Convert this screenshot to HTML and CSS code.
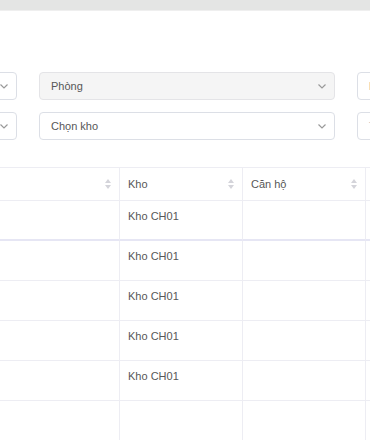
FILE: index.html
```html
<!doctype html>
<html lang="vi">
  <head>
    <meta charset="UTF-8" />
    <meta name="viewport" content="width=device-width, initial-scale=1.0" />
    <title>Kho</title>
    <link rel="stylesheet" href="styles.css">
  </head>
  <body>
    <div class="topbar"></div>
    <div class="filters">
      <div class="select"><span class="value"></span><svg class="chevron" width="8" height="5" viewBox="0 0 8 5"><polyline points="0.5,0.5 4,4 7.5,0.5" /></svg></div>
      <div class="select disabled"><span class="value">Phòng</span><svg class="chevron" width="8" height="5" viewBox="0 0 8 5"><polyline points="0.5,0.5 4,4 7.5,0.5" /></svg></div>
      <div class="select"><span class="value">Loại</span></div>
      <div class="select"><span class="value"></span><svg class="chevron" width="8" height="5" viewBox="0 0 8 5"><polyline points="0.5,0.5 4,4 7.5,0.5" /></svg></div>
      <div class="select"><span class="value">Chọn kho</span><svg class="chevron" width="8" height="5" viewBox="0 0 8 5"><polyline points="0.5,0.5 4,4 7.5,0.5" /></svg></div>
      <div class="select"><span class="value placeholder">Tìm kiếm</span></div>
    </div>
    <div class="table">
      <div class="th"><span></span><svg class="sort" width="6" height="10" viewBox="0 0 6 10"><polygon points="3,0 6,4 0,4" /><polygon points="0,6 6,6 3,10" /></svg></div>
      <div class="th"><span>Kho</span><svg class="sort" width="6" height="10" viewBox="0 0 6 10"><polygon points="3,0 6,4 0,4" /><polygon points="0,6 6,6 3,10" /></svg></div>
      <div class="th"><span>Căn hộ</span><svg class="sort" width="6" height="10" viewBox="0 0 6 10"><polygon points="3,0 6,4 0,4" /><polygon points="0,6 6,6 3,10" /></svg></div>
      <div class="th"></div>

      <div class="td first"></div><div class="td first">Kho CH01</div><div class="td first"></div><div class="td first"></div>
      <div class="td"></div><div class="td">Kho CH01</div><div class="td"></div><div class="td"></div>
      <div class="td"></div><div class="td">Kho CH01</div><div class="td"></div><div class="td"></div>
      <div class="td"></div><div class="td">Kho CH01</div><div class="td"></div><div class="td"></div>
      <div class="td"></div><div class="td">Kho CH01</div><div class="td"></div><div class="td"></div>
      <div class="td"></div><div class="td"></div><div class="td"></div><div class="td"></div>
    </div>
  </body>
</html>
```

FILE: styles.css
```css
body {
  font-family: "Liberation Sans", Arial, sans-serif;
  font-size: 11px;
  color: #575757;
  margin: 0;
  padding: 0;
  background-color: #fff;
  overflow: hidden;
}

* {
  box-sizing: border-box;
}

.topbar {
  height: 11px;
  background-color: #e4e5e4;
  border-bottom: 1px solid #efefef;
}

.filters {
  display: grid;
  grid-template-columns: repeat(3, 296px);
  column-gap: 22px;
  row-gap: 12px;
  margin-top: 61px;
  margin-left: -279px;
}
.select {
  display: flex;
  align-items: center;
  justify-content: space-between;
  height: 28px;
  padding: 0 8px 0 11px;
  border: 1px solid #dcdfe6;
  border-radius: 4px;
  background-color: #fff;
  white-space: nowrap;
  overflow: hidden;
}
.select.disabled {
  background-color: #f5f5f5;
  border-color: #e4e4e7;
}
.select .placeholder {
  color: #b5b5b5;
}
.chevron {
  flex-shrink: 0;
}
.chevron polyline {
  fill: none;
  stroke: #9a9a9a;
  stroke-width: 1.2;
}

.table {
  display: grid;
  grid-template-columns: repeat(4, 123px);
  margin-top: 27px;
  margin-left: -3px;
}
.th {
  display: flex;
  align-items: center;
  justify-content: space-between;
  height: 34px;
  padding: 0 8px;
  border-top: 1px solid #ededf3;
  border-bottom: 1px solid #ededf3;
  border-right: 1px solid #ededf3;
}
.sort polygon {
  fill: #d4d4da;
}
.td {
  height: 40px;
  padding: 9px 8px 0 8px;
  border-bottom: 1px solid #ededf3;
  border-right: 1px solid #ededf3;
}
.td.first {
  border-bottom: 2px solid #e6e6f4;
}
```
